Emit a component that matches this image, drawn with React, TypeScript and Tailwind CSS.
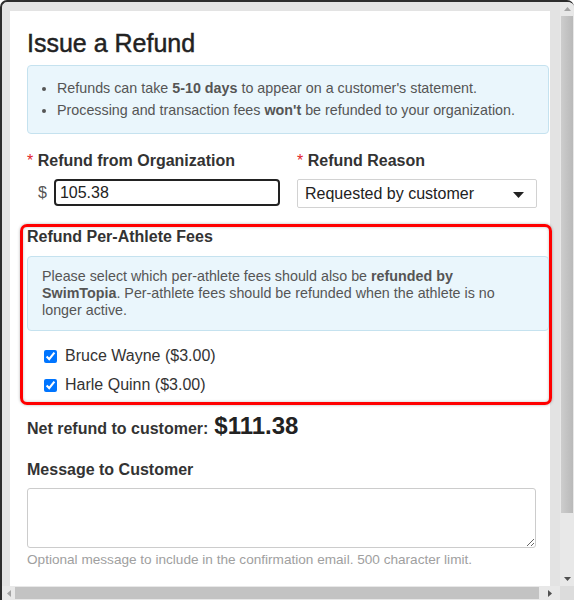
import React, { useState } from 'react';

const athletes = [
  { id: 1, name: 'Bruce Wayne', fee: '$3.00' },
  { id: 2, name: 'Harle Quinn', fee: '$3.00' },
];

const Required = () => <span className="text-[#e3262b] font-normal">*</span>;

const VScroll = () => (
  <div className="w-[14px] flex flex-col bg-[#e8e8e8]">
    <div className="h-[14px] flex items-center justify-center">
      <svg width="7" height="4" viewBox="0 0 7 4">
        <path d="M0 4 L3.5 0 L7 4 Z" fill="#a3a3a3" />
      </svg>
    </div>
    <div className="mx-[1px] h-[497px] bg-gradient-to-r from-[#cdcdcd] to-[#b9b9b9]" />
    <div className="flex-1" />
    <div className="h-[14px] flex items-center justify-center">
      <svg width="7" height="4" viewBox="0 0 7 4">
        <path d="M0 0 L7 0 L3.5 4 Z" fill="#505050" />
      </svg>
    </div>
  </div>
);

const HScroll = () => (
  <div className="h-[14px] flex bg-[#e8e8e8]">
    <div className="w-[13px] flex items-center justify-center">
      <svg width="4" height="7" viewBox="0 0 4 7">
        <path d="M4 0 L0 3.5 L4 7 Z" fill="#a3a3a3" />
      </svg>
    </div>
    <div className="my-[1px] w-[524px] bg-[#c3c3c3]" />
    <div className="flex-1 flex items-center justify-center">
      <svg width="4" height="7" viewBox="0 0 4 7">
        <path d="M0 0 L4 3.5 L0 7 Z" fill="#505050" />
      </svg>
    </div>
    <div className="w-[14px] bg-[#dcdcdc]" />
  </div>
);

export default function App() {
  const [amount, setAmount] = useState('105.38');
  const [checked, setChecked] = useState<Record<number, boolean>>({ 1: true, 2: true });
  const [message, setMessage] = useState('');

  return (
    <div className="w-[574px] h-[600px] overflow-hidden bg-[#e3e3e3] border-t-2 border-l-2 border-[#2c2c2c] rounded-t-[7px] flex flex-col font-['Liberation_Sans',Arial,sans-serif] text-[#333]">
      <div className="flex flex-1 min-h-0">
        <div className="pt-[9px] pl-[8px] pr-[10px]">
          <div className="bg-white h-full w-[540px] pl-[17px]">
            <div className="w-[522px]">
              <h1 className="pt-[18px] text-[25px] leading-[28px] text-[#222] [-webkit-text-stroke:0.45px_#222]">
                Issue a Refund
              </h1>

              <div className="mt-[8px] bg-[#eaf6fc] border border-[#c5e2ef] rounded-[4px] pt-[11px] pb-[12px] pl-[29px] text-[14.3px] leading-[22px] text-[#555]">
                <ul className="list-disc">
                  <li>
                    Refunds can take <b>5-10 days</b> to appear on a customer's statement.
                  </li>
                  <li>
                    Processing and transaction fees <b>won't</b> be refunded to your organization.
                  </li>
                </ul>
              </div>

              <div className="mt-[17px] flex">
                <div className="w-[270px]">
                  <div className="text-[16px] leading-[20px] font-bold">
                    <Required /> Refund from Organization
                  </div>
                  <div className="mt-[8px] flex items-center">
                    <span className="ml-[11px] text-[16px] text-[#555]">$</span>
                    <input
                      value={amount}
                      onChange={(e) => setAmount(e.target.value)}
                      className="ml-[7px] w-[226px] h-[27px] border-2 border-[#222] rounded-[4px] pl-[4px] text-[16px] text-[#222] outline-none"
                    />
                  </div>
                </div>
                <div>
                  <div className="text-[16px] leading-[20px] font-bold">
                    <Required /> Refund Reason
                  </div>
                  <div className="mt-[8px] w-[240px] h-[29px] border border-[#d2d2d2] rounded-[2px] pl-[7px] pr-[12px] flex items-center justify-between text-[16px] text-[#222]">
                    <span>Requested by customer</span>
                    <svg width="11" height="6" viewBox="0 0 11 6" className="mt-[3px]">
                      <path d="M0 0 L11 0 L5.5 6 Z" fill="#222" />
                    </svg>
                  </div>
                </div>
              </div>

              <section className="mt-[16px] -ml-[7px] w-[532px] border-[3px] border-[#ff0000] rounded-[7px] pl-[4px] pb-[7px] shadow-[0_0_3px_rgba(0,0,0,0.3),inset_0_0_3px_rgba(0,0,0,0.25)]">
                <div className="text-[16px] leading-[20px] font-bold text-[#333]">Refund Per-Athlete Fees</div>
                <div className="mt-[9px] w-[522px] bg-[#eaf6fc] border border-[#c5e2ef] rounded-[4px] pt-[11px] pb-[11px] pl-[14px] pr-[40px] text-[14.3px] leading-[17px] text-[#555]">
                  Please select which per-athlete fees should also be <b>refunded by SwimTopia</b>. Per-athlete fees
                  should be refunded when the athlete is no longer active.
                </div>
                <div className="mt-[15px] flex flex-col gap-[9px] pl-[17px]">
                  {athletes.map((a) => (
                    <label key={a.id} className="flex items-center gap-[8px] text-[16px] leading-[20px] text-[#333]">
                      <input
                        type="checkbox"
                        checked={!!checked[a.id]}
                        onChange={() => setChecked({ ...checked, [a.id]: !checked[a.id] })}
                        className="m-0 w-[13px] h-[13px]"
                      />
                      {a.name} ({a.fee})
                    </label>
                  ))}
                </div>
              </section>

              <div className="mt-[7px] flex items-baseline font-bold">
                <span className="text-[16px]">Net refund to customer:</span>
                <span className="ml-[6px] text-[24px] leading-[28px] text-[#222]">$111.38</span>
              </div>

              <div className="mt-[19px] text-[16px] leading-[20px] font-bold">Message to Customer</div>
              <textarea
                value={message}
                onChange={(e) => setMessage(e.target.value)}
                className="mt-[8px] block w-[509px] h-[60px] border border-[#cccccc] rounded-[3px] outline-none"
              />
              <div className="mt-[3px] text-[13.6px] leading-[18px] text-[#a0a0a0]">
                Optional message to include in the confirmation email. 500 character limit.
              </div>
            </div>
          </div>
        </div>
        <VScroll />
      </div>
      <HScroll />
    </div>
  );
}
